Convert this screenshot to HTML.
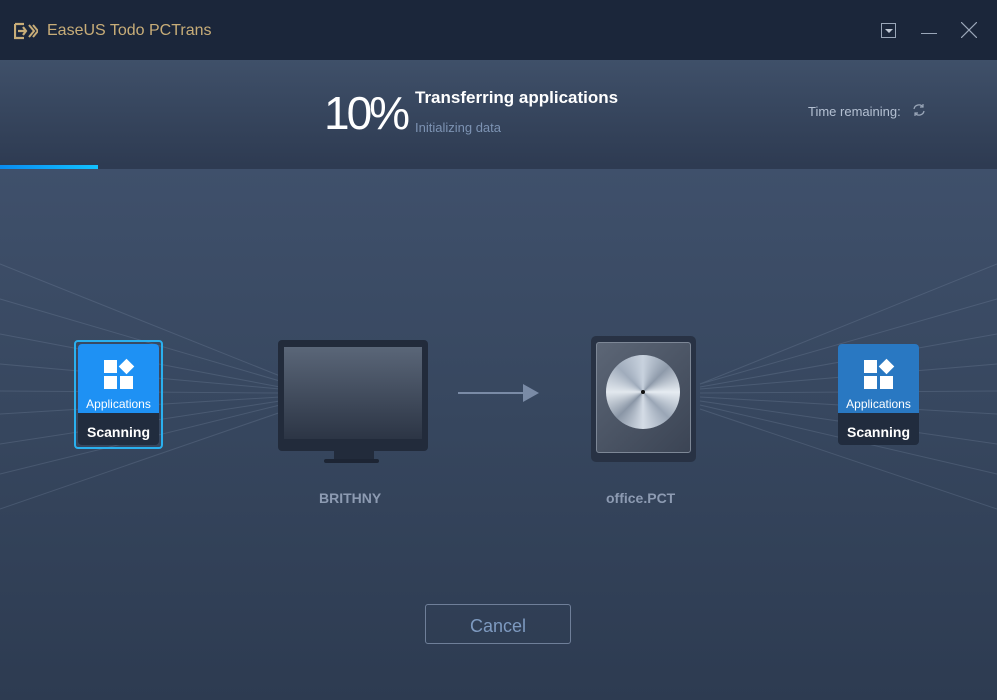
<!DOCTYPE html>
<html><head><meta charset="utf-8"><style>
*{margin:0;padding:0;box-sizing:border-box}
body{width:997px;height:700px;overflow:hidden;font-family:"Liberation Sans",sans-serif;background:#2e3b52;position:relative}
.hdr{position:absolute;left:0;top:0;width:997px;height:60px;background:#1b263a}
.title{position:absolute;left:47px;top:22px;color:#c8ad78;font-size:16px}
.prog{position:absolute;left:0;top:60px;width:997px;height:105px;background:linear-gradient(#3f5069,#2e3b52)}
.bar{position:absolute;left:0;top:165px;width:997px;height:4px;background:#2e3b52}
.bar i{position:absolute;left:0;top:0;width:98px;height:4px;background:linear-gradient(90deg,#0a8cf0,#12c2ff)}
.main{position:absolute;left:0;top:169px;width:997px;height:531px;background:linear-gradient(#3f506b 0%,#37475f 45%,#2d3b51 100%)}
.pct{position:absolute;left:324px;top:88px;color:#fff;font-size:46px;letter-spacing:-3px;line-height:50px}
.t1{position:absolute;left:415px;top:88px;color:#fff;font-size:17px;font-weight:bold}
.t2{position:absolute;left:415px;top:120px;color:#7d93b3;font-size:13px}
.tr{position:absolute;left:808px;top:104px;color:#b4c0d2;font-size:13px}
.app{position:absolute;width:81px;height:101px;border-radius:4px;overflow:hidden}
.app .top{height:69px;text-align:center;color:#fff;font-size:12px;padding-top:53px;position:relative}
.app .bot{height:32px;background:#212c3e;color:#fff;font-weight:bold;font-size:14px;text-align:center;line-height:38px}
.icon{position:absolute;left:26px;top:16px;width:30px;height:30px}
.icon b{position:absolute;width:13px;height:13px;background:#fff}
.lbl{position:absolute;color:#8d9bb2;font-size:14px;font-weight:bold}
.cancel{position:absolute;left:425px;top:604px;width:146px;height:40px;border:1px solid #6f7f99;border-radius:3px;color:#7e9ac0;font-size:18px;text-align:center;line-height:42px}
</style></head><body>
<div class="hdr">
<svg style="position:absolute;left:14px;top:22px" width="24" height="18" viewBox="0 0 24 18"><path d="M1 2h9M1 2v14h9M4 9h8M9 5l3 4-3 4" stroke="#c8ad78" stroke-width="2.2" fill="none"/><path d="M15 3l5 6-5 6M19 3l5 6-5 6" stroke="#c8ad78" stroke-width="2" fill="none"/></svg>
<div class="title">EaseUS Todo PCTrans</div>
<div style="position:absolute;left:881px;top:23px;width:15px;height:15px;border:1px solid #9aa6b8"><div style="position:absolute;left:3px;top:5px;border-left:4px solid transparent;border-right:4px solid transparent;border-top:4px solid #c0c8d4"></div></div>
<div style="position:absolute;left:921px;top:33px;width:16px;height:1px;background:#9aa6b8"></div>
<svg style="position:absolute;left:961px;top:22px" width="16" height="16"><path d="M0 0L16 16M16 0L0 16" stroke="#9aa6b8" stroke-width="1.2"/></svg>
</div>
<div class="prog"></div>
<div class="pct">10%</div>
<div class="t1">Transferring applications</div>
<div class="t2">Initializing data</div>
<div class="tr">Time remaining:</div>
<svg style="position:absolute;left:912px;top:103px" width="14" height="14" viewBox="0 0 14 14"><path d="M11 4A5 5 0 0 0 2 6M3 10A5 5 0 0 0 12 8" stroke="#9aa6b8" stroke-width="1.3" fill="none"/><path d="M11 1v3h-3M3 13v-3h3" stroke="#9aa6b8" stroke-width="1.2" fill="none"/></svg>
<div class="bar"><i></i></div>
<div class="main"></div>
<svg style="position:absolute;left:0;top:169px" width="997" height="531">
<g stroke="#9fb0c8" stroke-width="1" opacity="0.18">
<line x1="0" y1="95" x2="300" y2="215"/><line x1="0" y1="130" x2="290" y2="215"/><line x1="0" y1="165" x2="280" y2="218"/><line x1="0" y1="195" x2="280" y2="220"/>
<line x1="0" y1="222" x2="280" y2="224"/><line x1="0" y1="245" x2="280" y2="228"/><line x1="0" y1="275" x2="280" y2="232"/><line x1="0" y1="305" x2="280" y2="236"/><line x1="0" y1="340" x2="290" y2="240"/>
<line x1="997" y1="95" x2="700" y2="215"/><line x1="997" y1="130" x2="700" y2="215"/><line x1="997" y1="165" x2="700" y2="218"/><line x1="997" y1="195" x2="700" y2="220"/>
<line x1="997" y1="222" x2="700" y2="224"/><line x1="997" y1="245" x2="700" y2="228"/><line x1="997" y1="275" x2="700" y2="232"/><line x1="997" y1="305" x2="700" y2="236"/><line x1="997" y1="340" x2="700" y2="240"/>
</g></svg>
<div style="position:absolute;left:74px;top:340px;width:89px;height:109px;border:2px solid #2ab0ef;border-radius:4px"></div>
<div class="app" style="left:78px;top:344px"><div class="top" style="background:#1e91f4"><div class="icon"><b style="left:0;top:0"></b><b style="left:16px;top:16px"></b><b style="left:0;top:16px"></b><b style="left:17px;top:1px;width:11px;height:11px;transform:rotate(45deg)"></b></div>Applications</div><div class="bot">Scanning</div></div>
<div class="app" style="left:838px;top:344px"><div class="top" style="background:#2978c2"><div class="icon"><b style="left:0;top:0"></b><b style="left:16px;top:16px"></b><b style="left:0;top:16px"></b><b style="left:17px;top:1px;width:11px;height:11px;transform:rotate(45deg)"></b></div>Applications</div><div class="bot">Scanning</div></div>
<div style="position:absolute;left:278px;top:340px;width:150px;height:111px;background:#222b3b;border-radius:4px"></div>
<div style="position:absolute;left:284px;top:347px;width:138px;height:92px;background:linear-gradient(#5a6678,#2c3545)"></div>
<div style="position:absolute;left:334px;top:451px;width:40px;height:8px;background:#222b3b"></div>
<div style="position:absolute;left:324px;top:459px;width:55px;height:4px;background:#1d2534;border-radius:2px"></div>
<div class="lbl" style="left:319px;top:490px">BRITHNY</div>
<div style="position:absolute;left:458px;top:392px;width:66px;height:2px;background:#7a8ba6"></div>
<div style="position:absolute;left:523px;top:384px;border-top:9px solid transparent;border-bottom:9px solid transparent;border-left:16px solid #7a8ba6"></div>
<div style="position:absolute;left:591px;top:336px;width:105px;height:126px;background:#283244;border-radius:5px"></div>
<div style="position:absolute;left:596px;top:342px;width:95px;height:111px;background:linear-gradient(135deg,#5c6676,#3b4454);border:1px solid #7d8796;border-radius:3px"></div>
<div style="position:absolute;left:606px;top:355px;width:74px;height:74px;border-radius:50%;background:conic-gradient(#c8d2de,#8e9aaa,#e6ecf2,#9aa6b6,#d4dce6,#8a96a6,#e2e8ee,#a0acbc,#c8d2de)"></div>
<div style="position:absolute;left:641px;top:390px;width:4px;height:4px;border-radius:50%;background:#111"></div>
<div class="lbl" style="left:606px;top:490px">office.PCT</div>
<div class="cancel">Cancel</div>
</body></html>
